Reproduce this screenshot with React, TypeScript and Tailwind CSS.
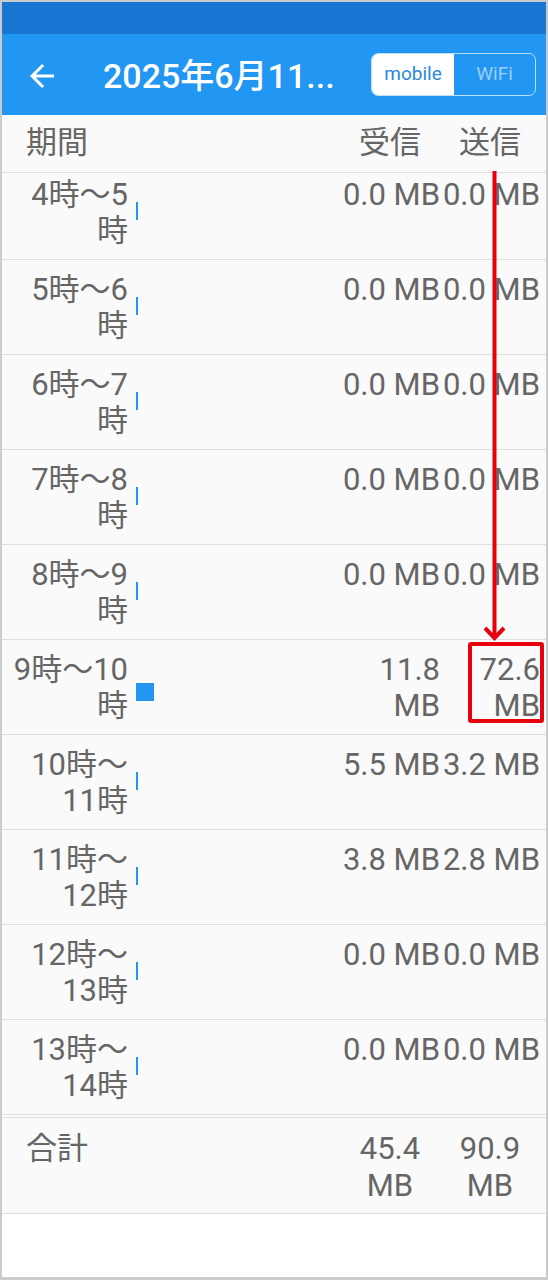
import React from "react";

type Row = { label: string; recv: string; sent: string; big?: boolean };

const rows: Row[] = [
  { label: "4時〜5時", recv: "0.0 MB", sent: "0.0 MB" },
  { label: "5時〜6時", recv: "0.0 MB", sent: "0.0 MB" },
  { label: "6時〜7時", recv: "0.0 MB", sent: "0.0 MB" },
  { label: "7時〜8時", recv: "0.0 MB", sent: "0.0 MB" },
  { label: "8時〜9時", recv: "0.0 MB", sent: "0.0 MB" },
  { label: "9時〜10時", recv: "11.8 MB", sent: "72.6 MB", big: true },
  { label: "10時〜11時", recv: "5.5 MB", sent: "3.2 MB" },
  { label: "11時〜12時", recv: "3.8 MB", sent: "2.8 MB" },
  { label: "12時〜13時", recv: "0.0 MB", sent: "0.0 MB" },
  { label: "13時〜14時", recv: "0.0 MB", sent: "0.0 MB" },
];

export default function App() {
  return (
    <div
      className="relative w-[548px] h-[1280px] border-2 border-b-[3px] border-[#cbcbcb] bg-white flex flex-col overflow-hidden text-[#666666]"
      style={{ fontFamily: 'Roboto, "Noto Sans CJK JP", sans-serif' }}
    >
      {/* status bar */}
      <div className="h-[32px] bg-[#1976d2] shrink-0" />
      {/* app bar */}
      <div className="h-[81px] bg-[#2196f3] shrink-0 flex items-center">
        <div className="w-[36px] h-[36px] ml-[22px] mt-[2px] flex items-center justify-center">
          <svg viewBox="0 0 24 24" width="36" height="36" fill="#ffffff">
            <path d="M20 11H7.83l5.59-5.59L12 4l-8 8 8 8 1.41-1.41L7.83 13H20v-2z" />
          </svg>
        </div>
        <div className="ml-[43px] mt-[2px] text-white text-[34px] font-medium leading-none whitespace-nowrap">
          2025年6月11...
        </div>
        <div className="ml-auto mr-[10px] flex h-[43px] w-[165px] rounded-[7px] border border-[#bbdefb] overflow-hidden">
          <div className="w-[82px] bg-white flex items-center justify-center text-[19px] text-[#2a88dc]">
            mobile
          </div>
          <div className="flex-1 flex items-center justify-center text-[19px] text-[#9fcdf7]">
            WiFi
          </div>
        </div>
      </div>
      {/* header */}
      <div className="h-[58px] shrink-0 bg-[#fafafa] border-b border-[#dedede] flex items-center text-[31px] pr-[6px]">
        <div className="pl-[24px]">期間</div>
        <div className="flex-1" />
        <div className="w-[100px] text-center">受信</div>
        <div className="w-[100px] text-center">送信</div>
      </div>
      {/* list */}
      <div className="h-[943px] shrink-0 overflow-hidden bg-[#fafafa]">
        <div className="-mt-[8px]">
          {rows.map((r) => (
            <div
              key={r.label}
              className="h-[95px] border-b border-[#dedede] flex text-[31px] leading-[36px] pt-[12px] pr-[6px]"
            >
              <div className="w-[126px] pl-[10px] text-right">{r.label}</div>
              <div className="self-center ml-[8px] -mt-[14px]">
                {r.big ? (
                  <div className="w-[18px] h-[18px] bg-[#2196f3] mt-[12px]" />
                ) : (
                  <div className="w-[2px] h-[18px] bg-[#2196f3]" />
                )}
              </div>
              <div className="flex-1" />
              <div className="w-[100px] text-right">{r.recv}</div>
              <div className="w-[100px] text-right">{r.sent}</div>
            </div>
          ))}
        </div>
      </div>
      {/* total */}
      <div className="mt-[1px] h-[97px] shrink-0 bg-[#fafafa] border-y border-[#dedede] flex text-[31px] leading-[37px] pt-[12px] pr-[6px]">
        <div className="pl-[24px]">合計</div>
        <div className="flex-1" />
        <div className="w-[100px] text-center">
          45.4
          <br />
          MB
        </div>
        <div className="w-[100px] text-center">
          90.9
          <br />
          MB
        </div>
      </div>
      <div className="flex-1 bg-white" />

      {/* red annotation overlay */}
      <svg
        className="absolute pointer-events-none"
        width="548"
        height="1280"
        viewBox="0 0 548 1280"
        style={{ left: -2, top: -2 }}
      >
        <line x1="494.5" y1="171" x2="494.5" y2="637" stroke="#e8000d" strokeWidth="4" />
        <polyline
          points="485,628 494.5,638 504,628"
          fill="none"
          stroke="#e8000d"
          strokeWidth="4"
        />
        <rect x="470" y="644" width="72" height="77" fill="none" stroke="#e8000d" strokeWidth="4" rx="1" />
      </svg>
    </div>
  );
}
